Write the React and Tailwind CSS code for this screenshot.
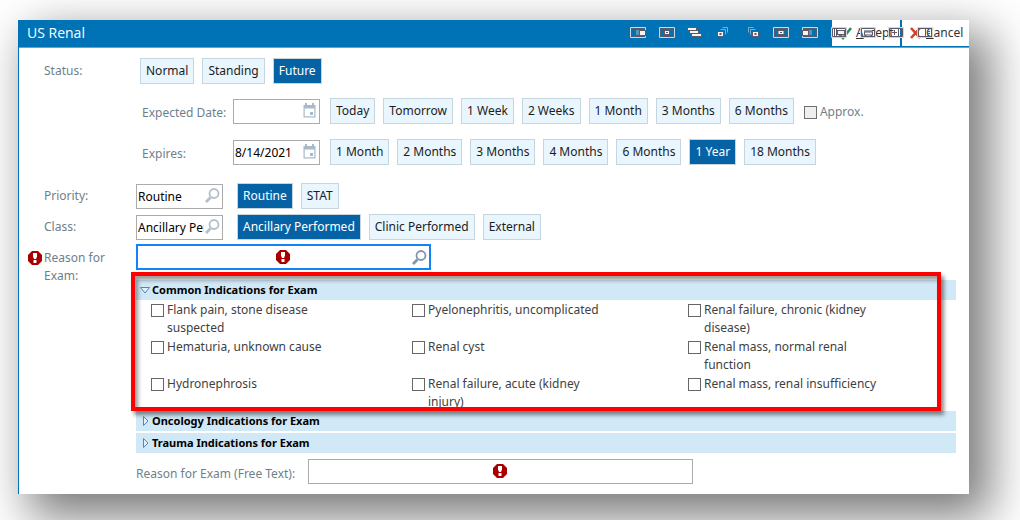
import { useState } from 'react';
import clsx from 'clsx';

const EXPECTED_OPTIONS = ['Today', 'Tomorrow', '1 Week', '2 Weeks', '1 Month', '3 Months', '6 Months'];
const EXPIRES_OPTIONS = ['1 Month', '2 Months', '3 Months', '4 Months', '6 Months', '1 Year', '18 Months'];

const COMMON_INDICATIONS = [
  'Flank pain, stone disease suspected',
  'Pyelonephritis, uncomplicated',
  'Renal failure, chronic (kidney disease)',
  'Hematuria, unknown cause',
  'Renal cyst',
  'Renal mass, normal renal function',
  'Hydronephrosis',
  'Renal failure, acute (kidney injury)',
  'Renal mass, renal insufficiency',
];

const FIELD = 'w-full h-[25px] border border-[#ababab] bg-white pl-px text-black outline-none';

function ButtonGroup({ label, options, value, onChange }) {
  return (
    <div role="group" aria-label={label} className="flex gap-2">
      {options.map(option => (
        <button
          key={option}
          type="button"
          aria-pressed={option === value}
          onClick={() => onChange(option)}
          className={clsx(
            'h-[26px] px-[5px] border border-[#c5d6df] whitespace-nowrap',
            option === value ? 'bg-[#0563a5] text-white' : 'bg-[#e9f6fe] text-[#1c1c1c]'
          )}
        >
          {option}
        </button>
      ))}
    </div>
  );
}

function AlertIcon({ className }) {
  return (
    <svg className={clsx('w-[14px] h-[14px]', className)} viewBox="0 0 14 14" aria-hidden="true">
      <path d="M4 0h6l4 4v6l-4 4H4l-4-4V4z" fill="#a80000" />
      <path d="M5 2h4v3.5L8 8H6L5 5.5z" fill="#fff" />
      <path d="M5.5 9h3v3h-3z" fill="#fff" />
    </svg>
  );
}

function SearchIcon({ className }) {
  return (
    <svg className={clsx('w-[15px] h-[15px]', className)} viewBox="0 0 15 15" fill="none" stroke="currentColor" aria-hidden="true">
      <circle cx="9" cy="5.5" r="4.5" strokeWidth="1.8" />
      <path d="M5.5 9.5L1 14" strokeWidth="2.8" />
    </svg>
  );
}

function CalendarIcon({ className }) {
  return (
    <svg className={clsx('w-[13px] h-[15px]', className)} viewBox="0 0 13 15" aria-hidden="true">
      <path d="M2 0h2v2h5V0h2v2h1.5v12.5H.5V2H2z" fill="#a9b9c8" />
      <path d="M1.7 5.5h9.6v7.8H1.7z" fill="#fff" />
      <path d="M7 9h3v3H7z" fill="#a9b9c8" />
    </svg>
  );
}

function DateField({ id, defaultValue }) {
  return (
    <div className="relative w-[87px]">
      <input id={id} type="text" defaultValue={defaultValue} className={FIELD} />
      <CalendarIcon className="absolute right-1 top-1" />
    </div>
  );
}

function LookupField({ id, value }) {
  return (
    <div className="relative w-[87px]">
      <input id={id} type="text" value={value} readOnly className={clsx(FIELD, 'pr-[18px]')} />
      <SearchIcon className="absolute right-[3px] top-1 text-[#b3c0cc]" />
    </div>
  );
}

// Window outline shared by most of the docking icons
function Frame({ children }) {
  return (
    <>
      <path d="M.5 1.5h15v10H.5z" stroke="#d6d6d6" fill="none" />
      <path d="M1.5 2.5h13v8h-13z" stroke="#5c5a66" fill="none" />
      {children}
    </>
  );
}

function Box({ x, y, w = 6, h = 5 }) {
  return <rect x={x} y={y} width={w} height={h} fill="#f4f4f4" stroke="#5c5a66" />;
}

const DOCK_ICONS = [
  { name: 'Dock right', art: <Frame><path d="M6 4h3v5H6z" fill="#5e93b8" /><Box x="9.5" y="4.5" /></Frame> },
  { name: 'Center', art: <Frame><Box x="5.5" y="4.5" w="5" h="4" /><path d="M7 6h2v1H7z" fill="#5c5a66" /></Frame> },
  { name: 'Cascade', art: <><Box x=".5" y="1.5" w="9" h="3" /><Box x="2.5" y="4.5" w="9" h="3" /><Box x="4.5" y="7.5" w="10" h="3" /></> },
  { name: 'Restore left', art: <><path d="M6.5 1.5h5v5M4.5 3.5h5v5" stroke="#80acc9" fill="none" /><Box x="1.5" y="5.5" w="6" h="5" /><path d="M3.5 7h2v2h-2z" fill="#5c5a66" /></> },
  { name: 'Restore right', art: <><path d="M3.5 6.5v-5h5M5.5 8.5v-5h5" stroke="#80acc9" fill="none" /><Box x="7.5" y="5.5" w="6" h="5" /><path d="M9.5 7h2v2h-2z" fill="#5c5a66" /></> },
  { name: 'Maximize', art: <Frame><Box x="5" y="4.5" w="6" h="4" /><path d="M7 6h2v1H7z" fill="#5c5a66" /></Frame> },
  { name: 'Dock left', art: <Frame><path d="M7 4h3v5H7z" fill="#5e93b8" /><Box x=".5" y="4.5" /></Frame> },
  { name: 'Split', art: <Frame><path d="M3.5 3v7M5.5 3v7" stroke="#5c5a66" /><Box x="6.5" y="4.5" w="7" h="4" /></Frame> },
  { name: 'Stack', art: <Frame><path d="M4 4h8v2H4z" fill="#9aa0a8" /><Box x="4.5" y="6" w="8" h="3" /></Frame> },
  { name: 'Add pane', art: <Frame><path d="M10.5 3v7M6.5 4v5M4 6.5h5" stroke="#5c5a66" /></Frame> },
  { name: 'Pages', art: <Frame><path d="M8.5 3v7M10 5.5h3M10 7.5h3" stroke="#5c5a66" /></Frame> },
];

function IndicationSection({ title, open, onToggle, children }) {
  return (
    <section>
      <button
        type="button"
        aria-expanded={open}
        onClick={onToggle}
        className="flex w-full h-5 items-center gap-0.5 bg-[#d1e8f6] pl-1 text-left text-[11px] font-bold text-black"
      >
        <svg className="w-2.5 h-2.5 shrink-0" viewBox="0 0 10 10" fill="#e4f1fb" stroke="#4f86c6" aria-hidden="true">
          {open ? <path d="M.5 2.5h9L5 8z" /> : <path d="M3.5.5v9L8 5z" />}
        </svg>
        <span>{title}</span>
      </button>
      {open && children}
    </section>
  );
}

export default function App() {
  const [status, setStatus] = useState('Future');
  const [expected, setExpected] = useState('');
  const [expires, setExpires] = useState('1 Year');
  const [priority, setPriority] = useState('Routine');
  const [examClass, setExamClass] = useState('Ancillary Performed');
  const [openSection, setOpenSection] = useState('common');

  const toggle = (name) => setOpenSection(openSection === name ? '' : name);

  return (
    <div className="min-h-screen overflow-hidden bg-white pt-5 pr-[51px] pb-[26px] pl-[18px] font-['Noto_Sans',sans-serif] text-[12px] leading-[18px] text-[#6f7f89]">
      <main className="border-l border-[#0072b5] bg-white shadow-[16px_18px_44px_5px_rgba(0,0,0,0.52)]">
        <header className="relative flex h-7 justify-between border-b border-[#5aa7d6] bg-[#0073b6] pl-2">
          <h1 className="font-['Open_Sans',sans-serif] text-[14px] leading-[26px] text-white">US Renal</h1>
          <div className="flex gap-0.5 pb-px text-[#333]">
            <button type="button" className="flex w-[68px] items-center gap-1 bg-white pl-1.5">
              <svg className="w-3.5 h-3.5" viewBox="0 0 14 14" fill="none" stroke="#2f8f5b" strokeWidth="2.6" aria-hidden="true">
                <path d="M1 8l4 4 8-10" />
              </svg>
              <span><u>A</u>ccept</span>
            </button>
            <button type="button" className="flex w-[67px] items-center gap-1 bg-white pl-2">
              <svg className="w-3 h-3" viewBox="0 0 12 12" fill="none" stroke="#d0432b" strokeWidth="2.6" aria-hidden="true">
                <path d="M1 1l9 10M10 1L1 11" />
              </svg>
              <span><u>C</u>ancel</span>
            </button>
          </div>
          {/* docking tools float over the action buttons */}
          <div className="absolute right-9 top-1.5 flex w-[303px] justify-between">
            {DOCK_ICONS.map(({ name, art }) => (
              <button key={name} type="button" aria-label={name}>
                <svg className="block w-4 h-3" viewBox="0 0 16 12">{art}</svg>
              </button>
            ))}
          </div>
        </header>

        <form className="pt-2.5 pr-[13px] pb-2.5 pl-[9px]" onSubmit={(e) => e.preventDefault()}>
          <div className="grid grid-cols-[108px_1fr] items-center">
            <span className="pl-4">Status:</span>
            <div className="pl-1"><ButtonGroup label="Status" options={['Normal', 'Standing', 'Future']} value={status} onChange={setStatus} /></div>
          </div>

          <div className="mt-3.5 flex flex-col gap-[15px] pl-[114px]">
            <div className="flex items-center">
              <label htmlFor="expected" className="w-[91px] pt-1">Expected Date:</label>
              <DateField id="expected" />
              <div className="flex items-center gap-2.5 pl-2.5">
                <ButtonGroup label="Expected date" options={EXPECTED_OPTIONS} value={expected} onChange={setExpected} />
                <label className="flex items-center gap-[3px] pt-0.5 whitespace-nowrap">
                  <input type="checkbox" disabled className="w-[13px] h-[13px] appearance-none border border-[#707070] bg-[#efefef]" />
                  Approx.
                </label>
              </div>
            </div>
            <div className="flex items-center">
              <label htmlFor="expires" className="w-[91px] pt-1">Expires:</label>
              <DateField id="expires" defaultValue="8/14/2021" />
              <div className="pl-2.5">
                <ButtonGroup label="Expires" options={EXPIRES_OPTIONS} value={expires} onChange={setExpires} />
              </div>
            </div>
          </div>

          <div className="mt-[18px] flex flex-col gap-[5px]">
            <div className="grid grid-cols-[108px_101px_1fr] items-center">
              <label htmlFor="priority" className="pl-4">Priority:</label>
              <LookupField id="priority" value={priority} />
              <ButtonGroup label="Priority" options={['Routine', 'STAT']} value={priority} onChange={setPriority} />
            </div>
            <div className="grid grid-cols-[108px_101px_1fr] items-center">
              <label htmlFor="class" className="pl-4">Class:</label>
              <LookupField id="class" value={examClass} />
              <ButtonGroup label="Class" options={['Ancillary Performed', 'Clinic Performed', 'External']} value={examClass} onChange={setExamClass} />
            </div>
          </div>

          <div className="mt-1 grid grid-cols-[108px_1fr] items-start">
            <div className="flex items-start pt-[5px]">
              <AlertIcon className="mt-0.5 mr-0.5 shrink-0" />
              <label htmlFor="reason" className="w-[72px]">Reason for Exam:</label>
            </div>
            <div>
              <div className="relative w-[295px]">
                <input id="reason" type="text" className="block h-[26px] w-full border-2 border-[#1484f5] bg-white pr-6 pl-1 text-black outline-none" />
                <AlertIcon className="absolute top-1.5 left-[140px]" />
                <SearchIcon className="absolute top-1.5 right-1 text-[#8297ab]" />
              </div>

              <div className="relative mt-2.5 flex flex-col gap-0.5">
                <IndicationSection title="Common Indications for Exam" open={openSection === 'common'} onToggle={() => toggle('common')}>
                  <div className="-mb-0.5 grid auto-rows-[37px] grid-cols-[261px_276px_1fr] overflow-hidden pl-[15px] text-[#3f3f3f]">
                    {COMMON_INDICATIONS.map(name => (
                      <label key={name} className="flex items-start gap-[3px] pt-px">
                        <input type="checkbox" className="mt-[3px] w-[13px] h-[13px] shrink-0 appearance-none border border-[#666] bg-white checked:bg-[#0563a5]" />
                        <span className="w-[184px]">{name}</span>
                      </label>
                    ))}
                  </div>
                </IndicationSection>
                <IndicationSection title="Oncology Indications for Exam" open={openSection === 'oncology'} onToggle={() => toggle('oncology')} />
                <IndicationSection title="Trauma Indications for Exam" open={openSection === 'trauma'} onToggle={() => toggle('trauma')} />

                {/* highlight round the common indications */}
                <div className="pointer-events-none absolute -top-2 right-[15px] -left-[5px] h-[139px] border-4 border-[#ff0000] shadow-[3px_4px_4px_rgba(0,0,0,0.45),inset_3px_4px_4px_rgba(0,0,0,0.4)]" />
              </div>

              <div className="mt-1.5 flex items-center">
                <label htmlFor="free-text" className="w-[172px] pt-1">Reason for Exam (Free Text):</label>
                <div className="relative w-[385px]">
                  <input id="free-text" type="text" className={clsx(FIELD, 'block')} />
                  <AlertIcon className="absolute top-[5px] left-[185px]" />
                </div>
              </div>
            </div>
          </div>
        </form>
      </main>
    </div>
  );
}
